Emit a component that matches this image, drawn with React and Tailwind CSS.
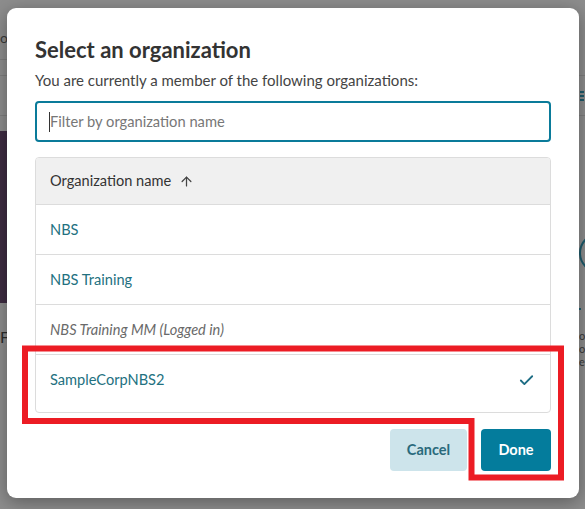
import { ArrowUp, Check } from "lucide-react";

const orgs = [
  { name: "NBS" },
  { name: "NBS Training" },
  { name: "NBS Training MM (Logged in)", current: true },
  { name: "SampleCorpNBS2", selected: true },
];

const App = () => {
  return (
    <div className="relative w-[585px] h-[509px] overflow-hidden bg-[#8d8d8d] font-['Lato',sans-serif]">
      {/* page behind the overlay */}
      <div className="flex justify-between h-full">
        <div className="w-[7px] flex flex-col">
          <div className="h-[30px]" />
          <div className="text-[14px] leading-4 text-[#3a3a3a] whitespace-nowrap">or</div>
          <div className="h-[14px] border-b border-[#7e7e7e]" />
          <div className="h-[16px] border-b border-[#7e7e7e]" />
          <div className="h-[40px] border-b border-[#7e7e7e]" />
          <div className="h-[15px]" />
          <div className="h-[172px] bg-[#3e2c42]" />
          <div className="text-[16px] leading-5 text-[#2c2c2c] mt-[24px]">F</div>
        </div>
        <div className="w-[6px] flex flex-col">
          <div className="h-[76px] border-b border-[#7e7e7e]" />
          <div className="h-[40px] border-b border-[#7e7e7e] flex items-center">
            <div className="flex flex-col gap-[2px] ml-[1px]">
              <div className="w-[4px] h-[2px] bg-[#1d5b6c]" />
              <div className="w-[4px] h-[2px] bg-[#1d5b6c]" />
              <div className="w-[4px] h-[2px] bg-[#1d5b6c]" />
            </div>
          </div>
          <div className="h-[117px]" />
          <div className="w-[40px] h-[40px] rounded-full border-2 border-[#1d5b6c]" />
          <div className="h-[35px]" />
          <div className="w-[2px] h-[2px] bg-[#1d5b6c]" />
          <div className="mt-[20px] flex flex-col gap-[2px] text-[11px] leading-[11px] text-[#3a3a3a]">
            <span>o</span>
            <span>o</span>
            <span>e</span>
          </div>
        </div>
      </div>

      {/* Modal */}
      <div className="absolute left-[7px] top-[8px] w-[572px] h-[490px] bg-white rounded-[9px] shadow-[0_4px_18px_rgba(0,0,0,0.35)] px-[28px] pt-[28px]">
        <h1 className="text-[22px] leading-7 font-bold text-[#333333]">Select an organization</h1>
        <p className="mt-[6px] text-[15px] leading-5 text-[#444444]">You are currently a member of the following organizations:</p>

        <div className="mt-[11px] h-[41px] border-2 border-[#0a7b9a] rounded-[4px] flex items-center px-[12px]">
          <div className="w-px h-[20px] bg-[#333]" />
          <span className="text-[14.7px] text-[#777777]">Filter by organization name</span>
        </div>

        {/* Table */}
        <div className="mt-[15px] border border-[#dcdcdc] rounded-[4px] overflow-hidden">
          <div className="h-[47px] bg-[#f0f0f0] border-b border-[#dcdcdc] flex items-center px-[14px] gap-[8px]">
            <span className="text-[14.6px] text-[#333333]">Organization name</span>
            <ArrowUp size={15} strokeWidth={2} className="text-[#444444]" />
          </div>
          {orgs.map((o, i) => (
            <div
              key={o.name}
              className={`flex items-center justify-between px-[14px] ${i < orgs.length - 1 ? "h-[50px] border-b border-[#dcdcdc]" : "h-[57px] pb-[7px]"}`}
            >
              <span className={`text-[14.6px] ${o.current ? "italic text-[#6a6a6a]" : "text-[#23717f]"}`}>{o.name}</span>
              {o.selected && <Check size={17} strokeWidth={2.6} className="text-[#1f6e85] mr-[1px]" />}
            </div>
          ))}
        </div>

        {/* Actions */}
        <div className="mt-[16px] flex justify-end gap-[14px]">
          <button className="w-[77px] h-[42px] rounded-[4px] bg-[#cde4eb] text-[#2a6a7c] text-[14.5px] font-bold">Cancel</button>
          <button className="w-[70px] h-[42px] rounded-[4px] bg-[#047c9c] text-white text-[14.5px] font-bold">Done</button>
        </div>
      </div>

      {/* red annotation outline */}
      <svg className="absolute left-0 top-0 pointer-events-none" width="585" height="509">
        <path d="M25 348.5 H561 V477.5 H471.5 V421 H25 Z" fill="none" stroke="#ec1c24" strokeWidth="6" />
      </svg>
    </div>
  );
};

export default App;
